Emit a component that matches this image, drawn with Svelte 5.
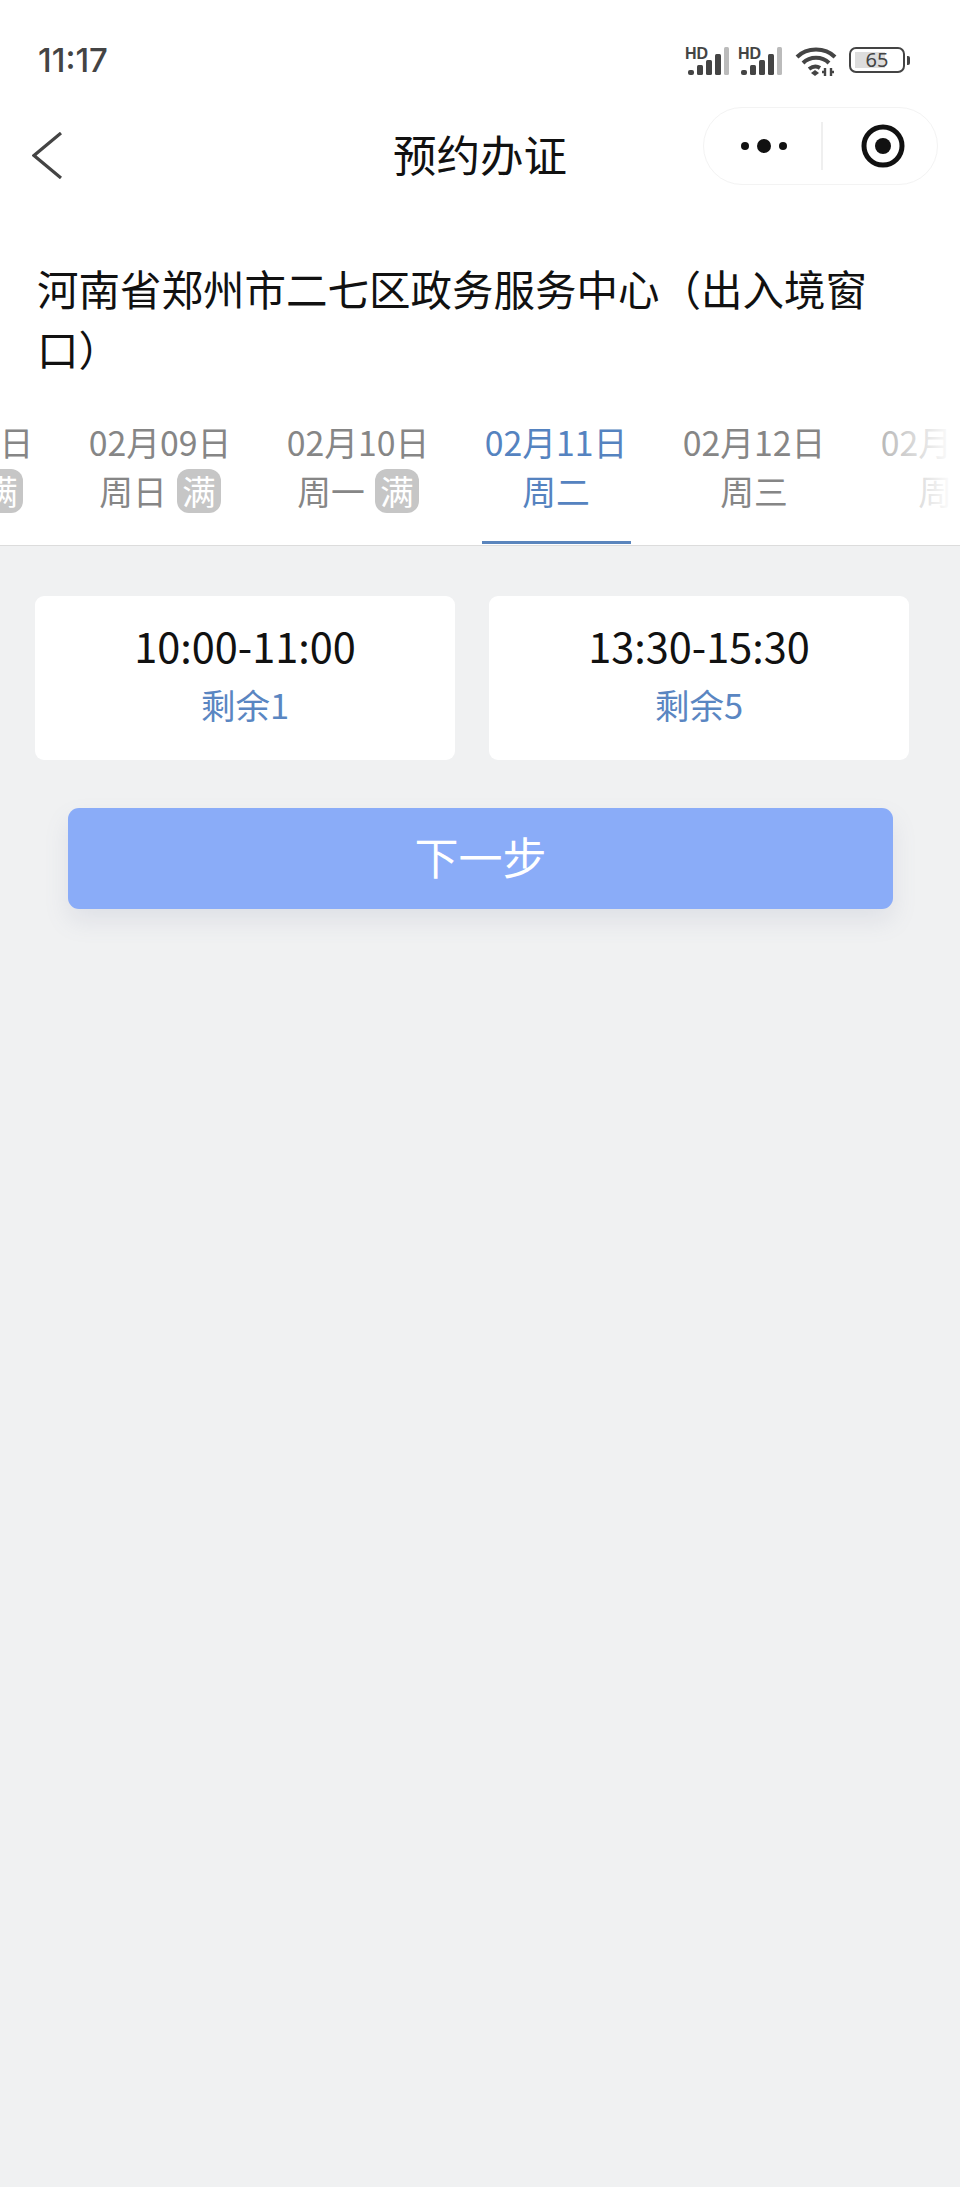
<script>
  const tabs = [
    { date: '02月08日', week: '周六', full: true },
    { date: '02月09日', week: '周日', full: true },
    { date: '02月10日', week: '周一', full: true },
    { date: '02月11日', week: '周二', active: true },
    { date: '02月12日', week: '周三' },
    { date: '02月13日', week: '周四' }
  ];
  const slots = [
    { time: '10:00-11:00', left: '剩余1' },
    { time: '13:30-15:30', left: '剩余5' }
  ];
</script>

<div class="page">
  <header class="status">
    <span class="clock">11:17</span>
    <div class="icons">
      {#each [0, 1] as s}
        <svg class="signal" width="45" height="30" viewBox="0 0 45 30">
          <text x="0" y="13" class="hd">HD</text>
          <rect x="3" y="24" width="6" height="5" rx="2" fill="#444" />
          <rect x="12" y="19" width="6" height="10" rx="1.5" fill="#444" />
          <rect x="21" y="14" width="6" height="15" rx="1.5" fill="#444" />
          <rect x="30" y="8" width="6" height="21" rx="1.5" fill="#444" />
          <rect x="39" y="1" width="5" height="28" rx="1.5" fill="#bbb" />
        </svg>
      {/each}
      <svg class="wifi" width="42" height="31" viewBox="0 0 42 31" fill="none" stroke="#444" stroke-width="4">
        <path d="M2 11C12 1 30 1 40 11" />
        <path d="M8 17C15 10 27 10 34 17" />
        <path d="M14 23C18 20 22 20 25 22" />
        <path d="M16 27l4-3 4 3-4 3z" fill="#444" stroke="none" />
        <path d="M30 22v8M36 22v8M27 26h3M36 26h3" stroke-width="2.4" />
      </svg>
      <div class="battery">
        <div class="cell"><span class="level"></span><span class="pct">65</span></div>
        <span class="nub"></span>
      </div>
    </div>
  </header>

  <nav class="nav">
    <svg class="back" width="30" height="47" viewBox="0 0 30 47" fill="none" stroke="#444" stroke-width="3.2">
      <path d="M29 1L2 23.5 29 46" />
    </svg>
    <h1 class="title">预约办证</h1>
    <div class="capsule">
      <svg width="56" height="20" viewBox="0 0 56 20" fill="#111">
        <circle cx="8" cy="10" r="4" /><circle cx="27" cy="10" r="7" /><circle cx="46" cy="10" r="4" />
      </svg>
      <span class="divider"></span>
      <svg width="44" height="44" viewBox="0 0 44 44">
        <circle cx="22" cy="22" r="19" fill="none" stroke="#111" stroke-width="5" />
        <circle cx="22" cy="22" r="8" fill="#111" />
      </svg>
    </div>
  </nav>

  <h2 class="place">河南省郑州市二七区政务服务中心（出入境窗口）</h2>

  <section class="tabs">
    <div class="track">
      {#each tabs as t}
        <div class="tab" class:active={t.active}>
          <div class="date">{t.date}</div>
          <div class="week">
            <span>{t.week}</span>
            {#if t.full}<span class="badge">满</span>{/if}
          </div>
          <div class="bar"></div>
        </div>
      {/each}
    </div>
    <div class="fade"></div>
  </section>

  <main class="body">
    <div class="slots">
      {#each slots as s}
        <div class="slot">
          <div class="time">{s.time}</div>
          <div class="left">{s.left}</div>
        </div>
      {/each}
    </div>
    <button class="next">下一步</button>
  </main>
</div>

<style>
  :global(body) {
    margin: 0;
  }
  .page {
    width: 960px;
    height: 2187px;
    overflow: hidden;
    background: #f0f1f2;
    font-family: "Noto Sans CJK SC", "Noto Sans", sans-serif;
    display: flex;
    flex-direction: column;
  }
  .status {
    background: #fff;
    height: 107px;
    box-sizing: border-box;
    padding: 42px 50px 0 38px;
    display: flex;
    justify-content: space-between;
    align-items: flex-start;
    flex: none;
  }
  .clock {
    font-family: Inter, sans-serif;
    font-weight: 500;
    font-size: 33px;
    line-height: 36px;
    color: #444;
  }
  .icons {
    display: flex;
    align-items: flex-start;
    gap: 8px;
    margin-top: 4px;
  }
  .signal {
    display: block;
  }
  .hd {
    font-family: "Liberation Sans", sans-serif;
    font-weight: 700;
    font-size: 16px;
    fill: #444;
  }
  .wifi {
    display: block;
    width: 44px;
    margin-left: 3px;
    margin-right: 3px;
  }
  .battery {
    display: flex;
    align-items: center;
    gap: 2px;
    margin-top: 1px;
  }
  .cell {
    position: relative;
    box-sizing: border-box;
    width: 56px;
    height: 26px;
    border: 2.5px solid #444;
    border-radius: 7px;
    display: flex;
    align-items: center;
    justify-content: center;
  }
  .level {
    position: absolute;
    left: 4px;
    top: 3px;
    bottom: 3px;
    width: 30px;
    background: #ddd;
  }
  .pct {
    position: relative;
    font-family: "Noto Sans", sans-serif;
    font-size: 20px;
    line-height: 20px;
    color: #444;
  }
  .nub {
    width: 3px;
    height: 9px;
    border-radius: 0 2px 2px 0;
    background: #444;
  }
  .nav {
    background: #fff;
    height: 100px;
    padding: 0 22px;
    display: grid;
    grid-template-columns: 1fr auto 1fr;
    align-items: center;
    flex: none;
  }
  .back {
    display: block;
    margin: -4px 0 0 10px;
  }
  .title {
    margin: -6px 0 0;
    font-size: 43.5px;
    font-weight: 400;
    line-height: 60px;
    color: #111;
  }
  .capsule {
    justify-self: end;
    align-self: start;
    box-sizing: border-box;
    width: 235px;
    height: 78px;
    border: 1.5px solid #f3f3f3;
    border-radius: 39px;
    display: flex;
    align-items: center;
    padding-left: 33px;
  }
  .divider {
    width: 1.5px;
    height: 48px;
    background: #efefef;
    margin: 0 38px 0 28px;
  }
  .place {
    margin: 0;
    background: #fff;
    padding: 51px 60px 2px 37px;
    font-size: 41.5px;
    font-weight: 400;
    line-height: 60px;
    color: #111;
    flex: none;
  }
  .tabs {
    position: relative;
    background: #fff;
    height: 166px;
    box-sizing: border-box;
    border-bottom: 1px solid #dcdcdc;
    overflow: hidden;
    flex: none;
  }
  .track {
    display: flex;
    margin-left: -137px;
    height: 165px;
  }
  .tab {
    flex: 0 0 198px;
    box-sizing: border-box;
    padding-top: 39px;
    display: flex;
    flex-direction: column;
    align-items: center;
    color: #868686;
    font-size: 33.8px;
  }
  .date {
    line-height: 46px;
    height: 46px;
    white-space: nowrap;
  }
  .week {
    margin-top: 4px;
    height: 44px;
    line-height: 44px;
    display: flex;
    align-items: center;
    gap: 10px;
  }
  .badge {
    width: 44px;
    height: 44px;
    border-radius: 12px;
    background: #c6c6c6;
    color: #fff;
    text-align: center;
  }
  .bar {
    margin-top: auto;
    width: 149px;
    height: 3px;
    margin-bottom: 1px;
  }
  .active {
    color: #5583c0;
  }
  .active .bar {
    background: #5a85bd;
  }
  .fade {
    position: absolute;
    top: 0;
    right: 0;
    bottom: -1px;
    width: 130px;
    background: linear-gradient(to right, rgba(255, 255, 255, 0), #fff 95%);
  }
  .body {
    padding: 50px 35px 0;
    flex: 1;
  }
  .slots {
    display: grid;
    grid-template-columns: 420px 420px;
    gap: 34px;
  }
  .slot {
    background: #fff;
    border-radius: 9px;
    height: 164px;
    box-sizing: border-box;
    padding-top: 22px;
    text-align: center;
  }
  .time {
    font-size: 41.5px;
    line-height: 54px;
    color: #111;
  }
  .left {
    margin-top: 9px;
    font-size: 34.5px;
    line-height: 46px;
    color: #5a86c2;
  }
  .next {
    display: block;
    width: 825px;
    height: 101px;
    margin: 48px 0 0 33px;
    padding: 0 0 5px;
    border: none;
    border-radius: 11px;
    background: #8aacf8;
    color: #fff;
    font-family: inherit;
    font-size: 44px;
    box-shadow: 0 12px 24px rgba(120, 130, 160, 0.14);
  }
</style>
